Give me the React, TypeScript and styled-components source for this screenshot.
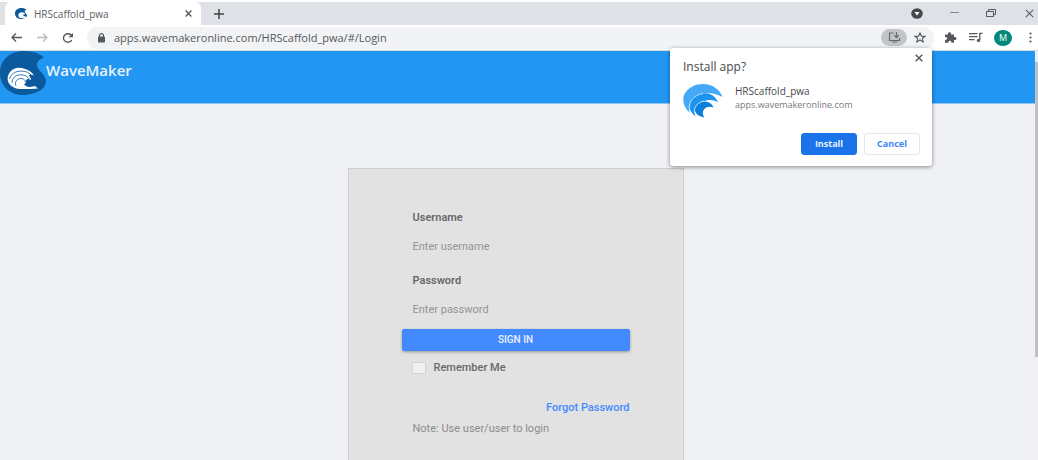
import React from "react";
import styled, { createGlobalStyle } from "styled-components";

const Global = createGlobalStyle`
  *, *::before, *::after { box-sizing: border-box; }
  body { margin: 0; background: #eff1f4; overflow: hidden; }
  button, input { font: inherit; }
`;

const chromeFont = `"Open Sans", "Noto Sans", sans-serif`;

const Window = styled.div`
  position: relative;
  display: flex;
  flex-direction: column;
  min-height: 100vh;
  font-family: Roboto, sans-serif;
`;

const TabStrip = styled.div`
  display: flex;
  align-items: flex-end;
  height: 25px;
  padding-left: 5px;
  border-top: 2px solid #fff;
  background: #dee1e6;
  font-family: ${chromeFont};
`;

const Tab = styled.div`
  display: flex;
  align-items: center;
  gap: 7px;
  width: 196px;
  height: 23px;
  padding: 0 6px 0 10px;
  border-radius: 6px 6px 0 0;
  background: #fff;
  color: #5a5d61;
  font-size: 10px;
`;

const TabTitle = styled.span`
  flex: 1;
`;

const IconButton = styled.button<{ $w?: number; $h?: number; $color?: string }>`
  display: flex;
  flex: none;
  align-items: center;
  justify-content: center;
  width: ${(p) => p.$w ?? 16}px;
  height: ${(p) => p.$h ?? 16}px;
  padding: 0;
  border: 0;
  background: none;
  color: ${(p) => p.$color ?? "#55585c"};
`;

const NewTab = styled.div`
  flex: 1;
  align-self: center;
  padding-left: 10px;
`;

const WindowControls = styled.div`
  display: flex;
  align-self: center;
  align-items: center;
  gap: 21px;
`;

const Toolbar = styled.div`
  display: flex;
  align-items: center;
  height: 26px;
  padding: 0 0 0 8px;
  border-bottom: 1px solid #d4dbe3;
  background: #fff;
  font-family: ${chromeFont};
`;

const NavButtons = styled.div`
  display: flex;
  gap: 10px;
  width: 79px;
`;

const AddressBar = styled.div`
  display: flex;
  flex: 1;
  align-items: center;
  height: 22px;
  padding: 0 6px 0 10px;
  border-radius: 11px;
  background: #f1f3f4;
`;

const Address = styled.input`
  flex: 1;
  min-width: 0;
  padding: 0 0 0 8px;
  border: 0;
  outline: 0;
  background: none;
  color: #55585c;
  font-size: 11px;
`;

const InstallBadge = styled.button`
  display: flex;
  align-items: center;
  justify-content: center;
  width: 26px;
  height: 17px;
  margin-right: 5px;
  padding: 0;
  border: 0;
  border-radius: 9px;
  background: #c2c4c6;
  color: #66696d;
`;

const Extensions = styled.div`
  display: flex;
  align-items: center;
  gap: 10px;
  padding-left: 8px;
`;

const Avatar = styled.button`
  width: 18px;
  height: 16px;
  padding: 0;
  border: 0;
  border-radius: 50%;
  background: #00897b;
  color: #fff;
  font-size: 9px;
  line-height: 16px;
`;

const Viewport = styled.div`
  display: flex;
  flex: 1;
`;

const Page = styled.div`
  display: flex;
  flex: 1;
  flex-direction: column;
  min-width: 0;
  background: #eff1f4;
`;

const Header = styled.header`
  display: flex;
  align-items: flex-start;
  height: 53px;
  border-bottom: 1px solid #8cc6f8;
  background: #2196f3;
`;

const Brand = styled.h1`
  margin: 8px 0 0;
  color: #e6f3fe;
  font-family: ${chromeFont};
  font-size: 15px;
  font-weight: 600;
  line-height: 22px;
`;

const ScrollTrack = styled.div`
  width: 3px;
  padding-top: 11px;
  background: #f1f1f1;
`;

const ScrollThumb = styled.div`
  height: 295px;
  background: #c1c1c1;
`;

const Main = styled.main`
  display: flex;
  flex: 1;
  justify-content: center;
  padding: 64px 4px 0 0;
`;

const LoginCard = styled.form`
  display: flex;
  flex-direction: column;
  width: 336px;
  max-width: 100%;
  padding: 40px 53px 0;
  border: 1px solid #cdced0;
  border-bottom: 0;
  background: #e2e2e2;
  font-size: 11px;
  line-height: 18px;
`;

const Field = styled.div`
  display: flex;
  flex-direction: column;
  height: 63px;
  padding-left: 11px;
`;

const Label = styled.label`
  color: #67696b;
  font-weight: 600;
`;

const TextInput = styled.input`
  height: 24px;
  margin-top: 8px;
  padding: 0;
  border: 0;
  border-bottom: 1px solid #dedede;
  outline: 0;
  background: none;
  color: #67696b;
  &::placeholder { color: #949494; opacity: 1; }
`;

const SignIn = styled.button`
  height: 22px;
  margin-top: -6px;
  padding: 0;
  border: 0;
  border-radius: 2px;
  background: #448aff;
  box-shadow: 0 1px 3px rgba(0, 0, 0, 0.35);
  color: #e8f1ff;
  font-size: 10px;
  font-weight: 500;
  line-height: 22px;
`;

const Remember = styled.label`
  display: flex;
  align-items: center;
  gap: 8px;
  margin-top: 8px;
  padding-left: 10px;
  color: #67696b;
  font-weight: 500;
`;

const Checkbox = styled.input`
  width: 14px;
  height: 12px;
  margin: 0;
  border: 1px solid #d2d3d4;
  background: #eff0f1;
  appearance: none;
`;

const ForgotLink = styled.a`
  align-self: flex-end;
  margin-top: 22px;
  color: #448aff;
  font-weight: 500;
  text-decoration: none;
`;

const Note = styled.p`
  margin: 3px 0 0;
  padding-left: 11px;
  color: #8c8c8c;
`;

const Popup = styled.section`
  position: absolute;
  top: 48px;
  right: 106px;
  width: 262px;
  padding: 10px 12px 11px 13px;
  border-radius: 3px;
  background: #fff;
  box-shadow: 0 1px 4px rgba(0, 0, 0, 0.45);
  font-family: ${chromeFont};
`;

const PopupTitle = styled.h2`
  margin: 0;
  color: #46494d;
  font-size: 12px;
  font-weight: 400;
  line-height: 18px;
`;

const PopupClose = styled.div`
  position: absolute;
  top: 2px;
  right: 5px;
`;

const AppInfo = styled.div`
  display: flex;
  gap: 12px;
  margin-top: 8px;
`;

const AppText = styled.div`
  display: flex;
  flex-direction: column;
`;

const AppName = styled.span`
  color: #46494d;
  font-size: 10px;
  line-height: 14px;
`;

const AppHost = styled.span`
  color: #777a7e;
  font-size: 9px;
  line-height: 14px;
`;

const Actions = styled.div`
  display: flex;
  justify-content: flex-end;
  gap: 7px;
  margin-top: 15px;
`;

const ActionButton = styled.button<{ $primary?: boolean }>`
  width: 56px;
  height: 22px;
  padding: 0;
  border: 1px solid ${(p) => (p.$primary ? "#1a73e8" : "#e4e6e9")};
  border-radius: 3px;
  background: ${(p) => (p.$primary ? "#1a73e8" : "#fff")};
  color: ${(p) => (p.$primary ? "#e8f1fd" : "#4285f4")};
  font-size: 9px;
  font-weight: 700;
  line-height: 20px;
`;

const line = { fill: "none", stroke: "currentColor" } as const;

const Cross = ({ size = 8, weight = 1.5 }: { size?: number; weight?: number }) => (
  <svg width={size} height={size} viewBox="0 0 8 8" {...line} strokeWidth={weight}>
    <path d="M.7.7 7.3 7.3M7.3.7.7 7.3" />
  </svg>
);

const swirl =
  "M24 0C32 0 39 2 43.500 6C42 8 37 9 37 14C37 20 46 22 46 31C45 39 34 44 23 44C9 44 0 34 0 22C0 9 10 0 24 0Z";

const Logo = () => (
  <svg width="46" height="44" viewBox="0 0 46 44">
    <path d={swirl} fill="#0b5a9d" />
    <path
      d="M13 36C7 33 6 26 10 21C14 16 20 16 25 18C29 19 32 21 34 25C31 23 29 24 29 25C30 26 31 27 31 29C28 27 26 28 26 30C26 32 25 33 24 33C25 35 27 36 30 36L35 35L38 37.500L31 38H20C17 38 15 37 13 36Z"
      fill="#fff"
    />
    <path
      d="M9.500 28C11 22 17 19 25 20.500C28 21 30 23 31 24M12 32C12 26 17 23 23 24C26 24.500 28 26 29 28M16 35C14 30 18 27 22 27.500C24 28 25 29 25.500 31"
      fill="none"
      stroke="#0b5a9d"
      strokeWidth="0.800"
    />
  </svg>
);

const Favicon = () => (
  <svg width="12" height="11" viewBox="0 0 46 44" preserveAspectRatio="none">
    <path d={swirl} fill="#0b5a9d" />
    <path d="M16 38C9 28 15 16 27 17C34 17 38 21 40 26C34 24 30 26 32 31L42 35V39C34 42 22 42 16 38Z" fill="#fff" />
  </svg>
);

const AppIcon = () => (
  <svg width="40" height="34" viewBox="0 0 40 34">
    <path d="M7 29C1 24-1 17 1 11C5 3 13 0 20 0C30 0 37 6 39.500 13C34 10 27 8 20 9.500C10 12 5 19 7 29Z" fill="#45a9f5" />
    <path d="M13 32.500C6 28 4 20 9 15C13 10 20 8.500 25 9.500C30 10.500 33 14 35 18C31 16 26 15 21 17C13 19 10 25 13 32.500Z" fill="#1b93f0" />
    <path d="M21.500 33.500C14 32 11 28 12 24C13 20 18 17 22 17.500C27 18 29 20 30.500 23.500C26 22 23 23 21 25.500C19 28 19.500 31 21.500 33.500Z" fill="#0b7fda" />
    <path d="M7 29C4 19 10 11 20 9.500M13 32.500C9 25 13 19 21 17" fill="none" stroke="#fff" strokeWidth="0.700" />
  </svg>
);

export default function App() {
  return (
    <Window>
      <Global />
      <TabStrip>
        <Tab>
          <Favicon />
          <TabTitle>HRScaffold_pwa</TabTitle>
          <IconButton aria-label="Close tab" $w={14}><Cross size={7} weight={1.6} /></IconButton>
        </Tab>
        <NewTab>
          <IconButton aria-label="New tab" $color="#3f4246">
            <svg width="10" height="10" viewBox="0 0 10 10" {...line} strokeWidth="1.500"><path d="M5 0V10M0 5H10" /></svg>
          </IconButton>
        </NewTab>
        <WindowControls>
          <IconButton aria-label="Search tabs" $color="#45484c">
            <svg width="12" height="11" viewBox="0 0 12 11">
              <ellipse cx="6" cy="5.500" rx="5.800" ry="5.200" fill="currentColor" />
              <path d="M3.500 4H8.500L6 7.500Z" fill="#fff" />
            </svg>
          </IconButton>
          <IconButton aria-label="Minimize" $color="#85888c">
            <svg width="9" height="9" viewBox="0 0 9 9" {...line}><path d="M0 3.500H9" /></svg>
          </IconButton>
          <IconButton aria-label="Restore">
            <svg width="10" height="9" viewBox="0 0 10 9" {...line}><path d="M.5 2.500H7.500V7.500H.5ZM2.500 2V.5H9.500V5.500H8" /></svg>
          </IconButton>
          <IconButton aria-label="Close window" $w={18}><Cross size={9} weight={0.9} /></IconButton>
        </WindowControls>
      </TabStrip>

      <Toolbar>
        <NavButtons>
          <IconButton aria-label="Back">
            <svg width="11" height="9" viewBox="0 0 11 9" {...line} strokeWidth="1.300"><path d="M11 4.500H1M5 .5 1 4.500 5 8.500" /></svg>
          </IconButton>
          <IconButton aria-label="Forward" $color="#b9bbbd">
            <svg width="11" height="9" viewBox="0 0 11 9" {...line} strokeWidth="1.300"><path d="M0 4.500H10M6 .5 10 4.500 6 8.500" /></svg>
          </IconButton>
          <IconButton aria-label="Reload">
            <svg width="12" height="10" viewBox="0 0 12 10" {...line} strokeWidth="1.400">
              <path d="M9.800 7.200A4.500 4.200 0 1 1 9.600 2.500" />
              <path d="M11 0V4.300H6.500Z" fill="currentColor" stroke="none" />
            </svg>
          </IconButton>
        </NavButtons>
        <AddressBar>
          <svg width="9" height="10" viewBox="0 0 9 10">
            <path d="M2.500 4V2.500C2.500 0 6.500 0 6.500 2.500V4" fill="none" stroke="#55585c" strokeWidth="1.200" />
            <rect x="1" y="3.500" width="7" height="6" rx="0.800" fill="#55585c" />
          </svg>
          <Address aria-label="Address" defaultValue="apps.wavemakeronline.com/HRScaffold_pwa/#/Login" />
          <InstallBadge aria-label="Install app">
            <svg width="13" height="11" viewBox="0 0 13 11" {...line} strokeWidth="1.200">
              <path d="M5.500 1H1.500V8.500H11.500V6M4 10H9M8.500 0V5.500M6 3.200 8.500 5.700 11 3.200" />
            </svg>
          </InstallBadge>
          <IconButton aria-label="Bookmark">
            <svg width="12" height="11" viewBox="0 0 12 11" {...line} strokeWidth="1.100">
              <path d="M6 1 7.400 4.100 11 4.300 8.300 6.500 9.200 9.900 6 8 2.800 9.900 3.700 6.500 1 4.300 4.600 4.100Z" />
            </svg>
          </IconButton>
        </AddressBar>
        <Extensions>
          <IconButton aria-label="Extensions">
            <svg width="13" height="11" viewBox="0 0 13 11">
              <path d="M1 2.500H4C3.500-.5 7.500-.5 7 2.500H10V5C13.500 4.500 13.500 8.300 10 8V10.800H7.400C7.600 8 4.200 8 4.400 10.800H1V8C4 8 4 5 1 5Z" fill="currentColor" />
            </svg>
          </IconButton>
          <IconButton aria-label="Media controls">
            <svg width="14" height="11" viewBox="0 0 14 11" {...line} strokeWidth="1.300">
              <path d="M0 1.600H8.500M0 4.600H8.500M0 7.600H5.500M10.800 8V1.300H13.500" />
              <circle cx="9.500" cy="8.400" r="1.700" fill="currentColor" stroke="none" />
            </svg>
          </IconButton>
          <Avatar aria-label="Profile">M</Avatar>
          <IconButton aria-label="Menu">
            <svg width="3" height="11" viewBox="0 0 3 11" fill="currentColor">
              <circle cx="1.500" cy="1.500" r="1.100" /><circle cx="1.500" cy="5.500" r="1.100" /><circle cx="1.500" cy="9.500" r="1.100" />
            </svg>
          </IconButton>
        </Extensions>
      </Toolbar>

      <Viewport>
        <Page>
          <Header>
            <Logo />
            <Brand>WaveMaker</Brand>
          </Header>
          <Main>
            <LoginCard>
              <Field>
                <Label htmlFor="username">Username</Label>
                <TextInput id="username" placeholder="Enter username" />
              </Field>
              <Field>
                <Label htmlFor="password">Password</Label>
                <TextInput id="password" type="password" placeholder="Enter password" />
              </Field>
              <SignIn type="button">SIGN IN</SignIn>
              <Remember>
                <Checkbox type="checkbox" />
                Remember Me
              </Remember>
              <ForgotLink href="#forgot">Forgot Password</ForgotLink>
              <Note>Note: Use user/user to login</Note>
            </LoginCard>
          </Main>
        </Page>
        <ScrollTrack><ScrollThumb /></ScrollTrack>
      </Viewport>

      <Popup role="dialog" aria-labelledby="install-title">
        <PopupTitle id="install-title">Install app?</PopupTitle>
        <PopupClose>
          <IconButton aria-label="Close"><Cross size={8} weight={1.4} /></IconButton>
        </PopupClose>
        <AppInfo>
          <AppIcon />
          <AppText>
            <AppName>HRScaffold_pwa</AppName>
            <AppHost>apps.wavemakeronline.com</AppHost>
          </AppText>
        </AppInfo>
        <Actions>
          <ActionButton $primary>Install</ActionButton>
          <ActionButton>Cancel</ActionButton>
        </Actions>
      </Popup>
    </Window>
  );
}
